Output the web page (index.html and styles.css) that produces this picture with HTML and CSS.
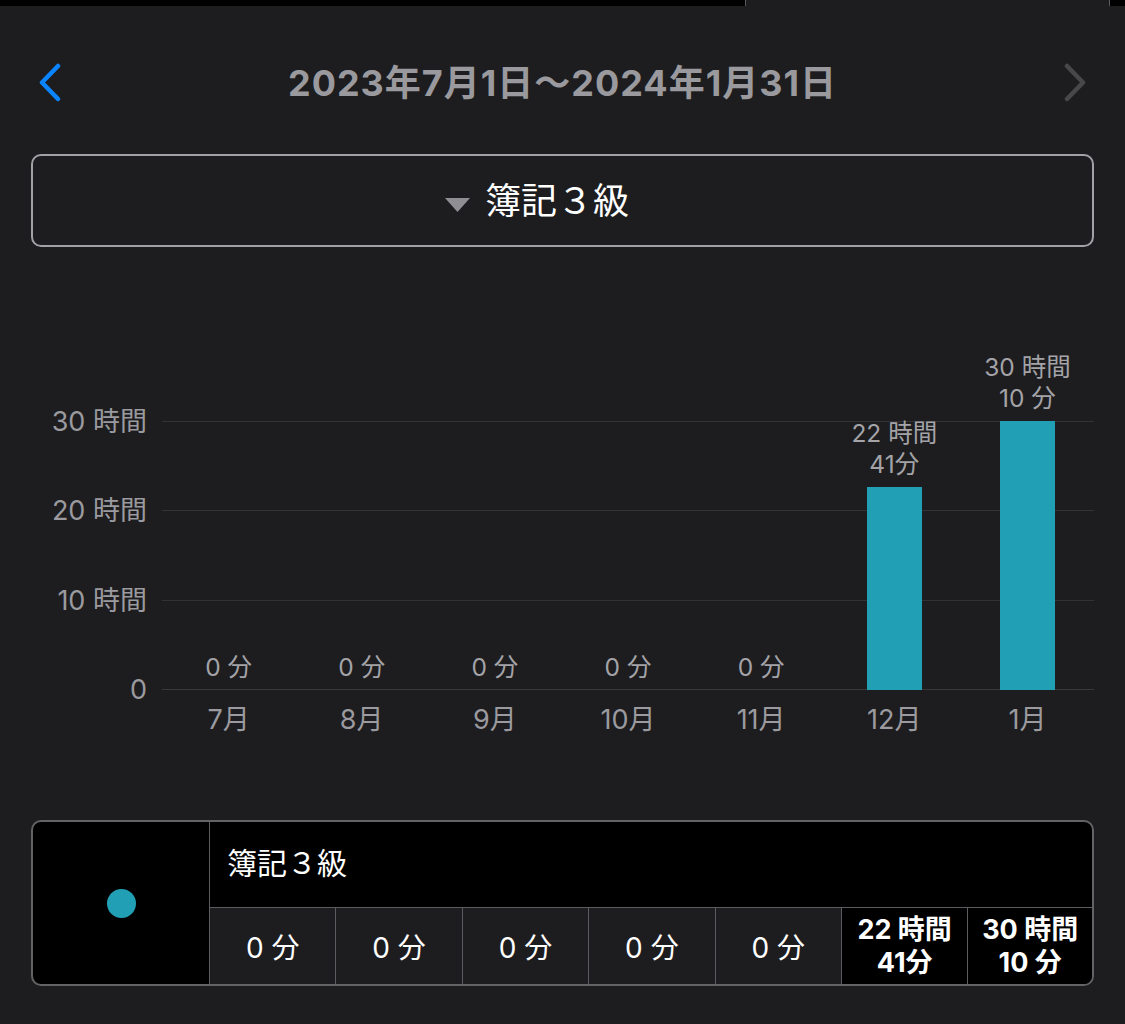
FILE: index.html
```html
<!DOCTYPE html>
<html lang="ja">
<head>
<meta charset="utf-8">
<title>学習時間</title>
<link rel="stylesheet" href="styles.css">
</head>
<body>
<div class="topstrip">
  <div class="strip-black strip-left"></div>
  <div class="strip-tab"></div>
  <div class="strip-black strip-right"></div>
</div>

<header class="period">
  <button class="nav nav-prev" aria-label="前へ">
    <svg width="24" height="40" viewBox="0 0 24 40"><path d="M20 4 L4 20.5 L20 37" fill="none" stroke="#0a84ff" stroke-width="4.5" stroke-linecap="round" stroke-linejoin="round"/></svg>
  </button>
  <h1 class="period-title">2023年7月1日〜2024年1月31日</h1>
  <button class="nav nav-next" aria-label="次へ">
    <svg width="24" height="40" viewBox="0 0 24 40"><path d="M4 4 L20 20.5 L4 37" fill="none" stroke="#48484b" stroke-width="4.5" stroke-linecap="round" stroke-linejoin="round"/></svg>
  </button>
</header>

<div class="picker">
  <svg class="picker-caret" width="25" height="14" viewBox="0 0 25 14"><polygon points="0,0 25,0 12.5,14" fill="#8e8e93"/></svg>
  <span class="picker-label">簿記３級</span>
</div>

<section class="chart">
  <div class="axis">
    <span class="tick" style="bottom:268px">30 時間</span>
    <span class="tick" style="bottom:178.6px">20 時間</span>
    <span class="tick" style="bottom:89.3px">10 時間</span>
    <span class="tick" style="bottom:0px">0</span>
  </div>
  <div class="plot">
    <div class="grid-line" style="bottom:268px"></div>
    <div class="grid-line" style="bottom:178.6px"></div>
    <div class="grid-line" style="bottom:89.3px"></div>
    <div class="grid-line base" style="bottom:0px"></div>
    <div class="col"><div class="val">0 分</div><div class="bar" style="height:0px"></div></div>
    <div class="col"><div class="val">0 分</div><div class="bar" style="height:0px"></div></div>
    <div class="col"><div class="val">0 分</div><div class="bar" style="height:0px"></div></div>
    <div class="col"><div class="val">0 分</div><div class="bar" style="height:0px"></div></div>
    <div class="col"><div class="val">0 分</div><div class="bar" style="height:0px"></div></div>
    <div class="col"><div class="val">22 時間<br>41分</div><div class="bar" style="height:202.6px"></div></div>
    <div class="col"><div class="val">30 時間<br>10 分</div><div class="bar" style="height:269.4px"></div></div>
  </div>
</section>
<div class="months">
  <span>7月</span><span>8月</span><span>9月</span><span>10月</span><span>11月</span><span>12月</span><span>1月</span>
</div>

<section class="summary">
  <div class="legend"><span class="dot"></span></div>
  <div class="summary-main">
    <div class="summary-title">簿記３級</div>
    <div class="summary-row">
      <div class="cell">0 分</div>
      <div class="cell">0 分</div>
      <div class="cell">0 分</div>
      <div class="cell">0 分</div>
      <div class="cell">0 分</div>
      <div class="cell strong">22 時間<br>41分</div>
      <div class="cell strong">30 時間<br>10 分</div>
    </div>
  </div>
</section>
</body>
</html>
```

FILE: styles.css
```css
* { box-sizing: border-box; }

html, body {
  margin: 0;
  padding: 0;
  background: #1d1d1f;
  font-family: "Inter", "Noto Sans CJK JP", sans-serif;
  color: #fff;
}

body { width: 1125px; height: 1024px; overflow: hidden; }

/* top strip */
.topstrip { display: flex; height: 6px; }
.strip-black { background: #000; }
.strip-left { width: 745px; }
.strip-tab { flex: 1; border-left: 1px solid #5a5a5e; border-right: 1px solid #5a5a5e; }
.strip-right { width: 15px; }

/* period header */
.period {
  margin-top: 42px;
  height: 64px;
  display: flex;
  align-items: center;
  justify-content: space-between;
  padding: 0 38px;
}
.nav {
  background: none;
  border: 0;
  padding: 0;
  width: 24px;
  height: 40px;
  display: flex;
  margin-top: 4px;
}
.period-title {
  margin: 0;
  font-size: 36px;
  font-weight: 700;
  color: #99999e;
  letter-spacing: 1px;
}

/* picker */
.picker {
  margin: 42px 31px 0;
  height: 93px;
  border: 2px solid #a1a1a6;
  border-radius: 10px;
  display: flex;
  align-items: center;
  justify-content: center;
  gap: 15px;
  padding-right: 51px;
}
.picker-caret { margin-top: 8px; }
.picker-label { font-size: 36px; color: #fff; line-height: 1; }

/* chart */
.chart {
  margin-top: 83px;
  display: flex;
  height: 360px;
}
.axis {
  position: relative;
  width: 162px;
}
.tick {
  position: absolute;
  right: 15px;
  transform: translateY(50%);
  font-size: 27px;
  line-height: 30px;
  color: #9a9a9f;
  white-space: nowrap;
}
.plot {
  position: relative;
  width: 932px;
  display: flex;
}
.grid-line {
  position: absolute;
  left: 0;
  right: 0;
  height: 1px;
  background: #323235;
}
.grid-line.base { background: #38383b; }
.col {
  position: relative;
  flex: 1;
  display: flex;
  flex-direction: column;
  justify-content: flex-end;
  align-items: center;
}
.val {
  font-size: 24.5px;
  line-height: 31px;
  color: #a3a3a8;
  text-align: center;
  margin-bottom: 7px;
  white-space: nowrap;
}
.bar {
  width: 55px;
  background: #21a0b5;
}

.months {
  margin-left: 162px;
  width: 932px;
  display: flex;
  padding-top: 15px;
  height: 60px;
}
.months span {
  flex: 1;
  text-align: center;
  font-size: 27px;
  line-height: 30px;
  color: #9a9a9f;
}

/* summary table */
.summary {
  margin: 70px 31px 0;
  height: 166px;
  border: 2px solid #636366;
  border-radius: 10px;
  overflow: hidden;
  display: flex;
  background: #000;
}
.legend {
  width: 177px;
  border-right: 1px solid #5c5c60;
  display: flex;
  align-items: center;
  justify-content: center;
}
.dot {
  width: 29px;
  height: 29px;
  border-radius: 50%;
  background: #21a0b5;
}
.summary-main {
  flex: 1;
  display: flex;
  flex-direction: column;
}
.summary-title {
  height: 86px;
  border-bottom: 1px solid #5c5c60;
  display: flex;
  align-items: center;
  padding-left: 17px;
  padding-bottom: 8px;
  font-size: 30px;
  color: #fff;
}
.summary-row {
  flex: 1;
  display: grid;
  grid-template-columns: repeat(6, 126.4px) 1fr;
}
.cell {
  display: flex;
  align-items: center;
  justify-content: center;
  text-align: center;
  background: #1d1d1f;
  font-size: 28px;
  color: #fff;
  border-right: 1px solid #5c5c60;
}
.cell:last-child { border-right: 0; }
.cell.strong {
  background: #000;
  font-weight: 700;
  font-size: 27px;
  line-height: 33px;
}
```
